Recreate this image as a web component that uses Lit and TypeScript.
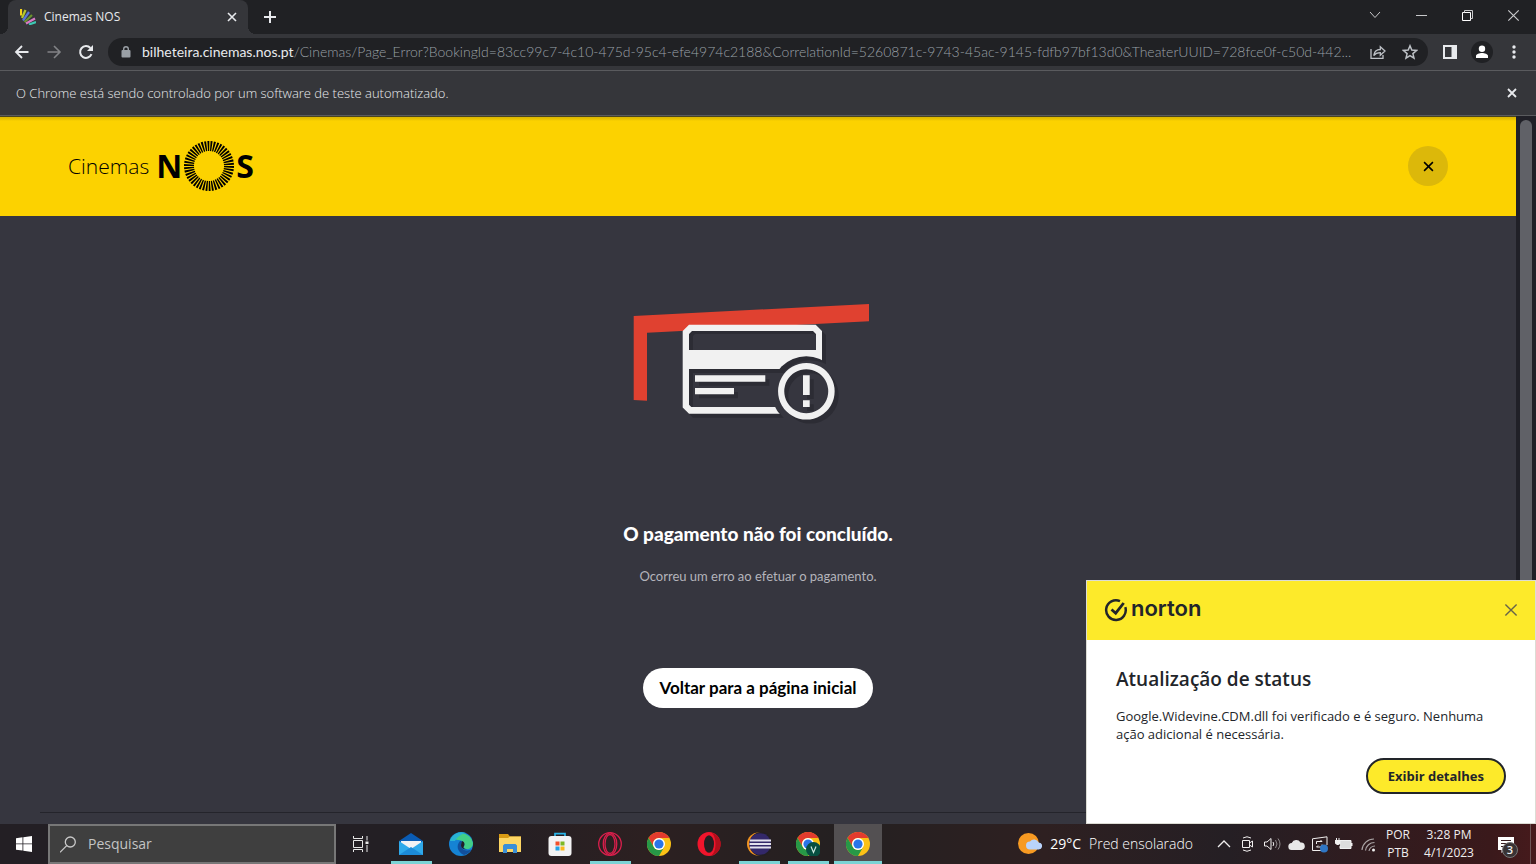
import { LitElement, html, css, svg } from "lit";
import { customElement } from "lit/decorators.js";
import { classMap } from "lit/directives/class-map.js";

const reset = css`
  :host, * { box-sizing: border-box; }
  button, input { font: inherit; color: inherit; background: none; border: 0; padding: 0; margin: 0; min-width: 0; outline: none; }
  button { display: grid; place-items: center; cursor: pointer; }
  svg { display: block; flex: none; }
  a { color: inherit; text-decoration: none; }
  h1, h2, p { margin: 0; }
`;

const cross = (size: number, width: number) => html`<svg width=${size} height=${size} viewBox="0 0 10 10" fill="none" stroke="currentColor" stroke-width=${width}><path d="M1 1 9 9M9 1 1 9" /></svg>`;

@customElement("browser-chrome")
export class BrowserChrome extends LitElement {
  static styles = [reset, css`
    :host { display: block; background: #35363a; color: #e8eaed; font-family: "Open Sans", "Noto Sans", sans-serif; }
    .strip { display: flex; height: 34px; background: #202124; }
    .tab { position: relative; display: flex; align-items: center; width: 240px; margin-left: 8px; padding: 0 8px 0 12px; background: #35363a; border-radius: 8px 8px 0 0; font-size: 12px; line-height: 16px; }
    .tab::before, .tab::after { content: ""; position: absolute; bottom: 0; width: 8px; height: 8px; }
    .tab::before { right: 100%; background: radial-gradient(circle at 0 0, #202124 8px, #35363a 8px); }
    .tab::after { left: 100%; background: radial-gradient(circle at 100% 0, #202124 8px, #35363a 8px); }
    .title { flex: 1; margin-left: 8px; }
    .close { width: 16px; height: 16px; }
    .new { width: 28px; margin-left: 8px; }
    .window { display: flex; margin-left: auto; height: 30px; }
    .window button { width: 46px; color: #c8c9cb; }
    .bar { display: flex; align-items: center; height: 36px; padding: 0 6px; }
    .tool { width: 32px; height: 28px; }
    .off { color: #828386; }
    .omni { display: flex; align-items: center; flex: 1; min-width: 0; height: 28px; margin: 0 6px; padding: 0 2px 0 12px; border-radius: 14px; background: #202124; font-family: Lato, sans-serif; font-size: 14px; line-height: 20px; }
    .omni label { margin-left: 10px; }
    .omni input { flex: 1; height: 20px; color: #9aa0a6; font-weight: 300; text-overflow: ellipsis; }
    .omni .tool { color: #bdc1c6; }
    .avatar { display: grid; place-items: center; width: 22px; height: 22px; border-radius: 50%; background: #202124; }
    .info { display: flex; align-items: center; justify-content: space-between; height: 46px; padding: 0 19px 0 16px; border-top: 1px solid #5a5b5e; border-bottom: 1px solid #5a5b5e; font-size: 13px; font-weight: 300; line-height: 18px; }
  `];

  render() {
    return html`
      <div class="strip">
        <div class="tab">
          <svg width="16" height="16" viewBox="0 0 16 16" fill="none" stroke-width="2.200">
            <path d="M1 0v6.500" stroke="#f3d21b" /><path d="M5.500 1 2 9" stroke="#b4c92a" /><path d="m9 3-6 8.500" stroke="#5878d8" />
            <path d="m12 6-7.500 7" stroke="#69942d" /><path d="m15 9.500-9 5" stroke="#d77bc4" /><path d="M16 13 9 15.500" stroke="#3cc9b4" />
          </svg>
          <span class="title">Cinemas NOS</span>
          <button class="close" aria-label="Fechar guia">${cross(10, 1.6)}</button>
        </div>
        <button class="new" aria-label="Nova guia"><svg width="12" height="12" viewBox="0 0 12 12" stroke="currentColor" stroke-width="2"><path d="M6 0v12M0 6h12" /></svg></button>
        <div class="window">
          <button aria-label="Pesquisar guias"><svg width="12" height="8" viewBox="0 0 12 8" fill="none" stroke="currentColor"><path d="m1 1 5 5.500 5-5.500" /></svg></button>
          <button aria-label="Minimizar"><svg width="11" height="11" viewBox="0 0 11 11" stroke="currentColor"><path d="M0 5.500h11" /></svg></button>
          <button aria-label="Restaurar"><svg width="11" height="11" viewBox="0 0 11 11" fill="none" stroke="#fff"><path d="M.5 2.500h8v8h-8z" /><path d="M2.500 2.500v-2h8v8h-2" stroke="#c8c9cb" /></svg></button>
          <button aria-label="Fechar">${cross(13, 0.9)}</button>
        </div>
      </div>
      <div class="bar">
        <button class="tool" aria-label="Voltar"><svg width="16" height="16" viewBox="0 0 16 16" fill="none" stroke="currentColor" stroke-width="1.800"><path d="M14.500 8H2M8 2 2 8l6 6" /></svg></button>
        <button class="tool off" aria-label="Avançar"><svg width="16" height="16" viewBox="0 0 16 16" fill="none" stroke="currentColor" stroke-width="1.600"><path d="M1.500 8H14M8 2l6 6-6 6" /></svg></button>
        <button class="tool" aria-label="Recarregar"><svg width="16" height="16" viewBox="0 0 16 16" fill="none" stroke="currentColor" stroke-width="2"><path d="M13.500 10.200A5.900 5.900 0 1 1 12.400 4" /><path d="M15 1v6H9z" fill="currentColor" stroke="none" /></svg></button>
        <div class="omni">
          <svg width="12" height="14" viewBox="0 0 12 14"><rect x="1.500" y="5" width="9" height="7.500" rx="1" fill="#9aa0a6" /><path d="M3.700 5.500V4a2.300 2.300 0 0 1 4.600 0v1.500" fill="none" stroke="#9aa0a6" stroke-width="1.400" /></svg>
          <label for="url">bilheteira.cinemas.nos.pt</label>
          <input id="url" type="text" value="/Cinemas/Page_Error?BookingId=83cc99c7-4c10-475d-95c4-efe4974c2188&CorrelationId=5260871c-9743-45ac-9145-fdfb97bf13d0&TheaterUUID=728fce0f-c50d-442..." />
          <button class="tool" aria-label="Compartilhar"><svg width="16" height="16" viewBox="0 0 16 16" fill="none" stroke="currentColor" stroke-width="1.300"><path d="M1 5v9.300h12V11" /><path d="M3.700 11.500c.6-4 2.800-6 6.600-6V2.700L15 7l-4.700 4.300V8.600c-3 0-5 .8-6.600 2.900z" /></svg></button>
          <button class="tool" aria-label="Favoritos"><svg width="16" height="16" viewBox="0 0 16 16" fill="none" stroke="currentColor" stroke-width="1.500"><path d="m8 1.800 1.800 4.300 4.700.4-3.600 3.100 1.100 4.600-4-2.500-4 2.500 1.100-4.600-3.600-3.100 4.700-.4z" /></svg></button>
        </div>
        <button class="tool" aria-label="Painel lateral"><svg width="14" height="14" viewBox="0 0 14 14" fill="none" stroke="currentColor" stroke-width="2"><path d="M1 1h12v12H1z" /><path d="M8.500 1H13v12H8.500z" fill="currentColor" stroke="none" /></svg></button>
        <button class="tool" aria-label="Perfil"><span class="avatar"><svg width="14" height="14" viewBox="0 0 14 14" fill="#fff"><circle cx="7" cy="3.700" r="3.200" /><path d="M1 13v-2c0-2 3.500-3 6-3s6 1 6 3v2z" /></svg></span></button>
        <button class="tool" aria-label="Menu"><svg width="4" height="14" viewBox="0 0 4 14" fill="currentColor"><circle cx="2" cy="2" r="1.700" /><circle cx="2" cy="7" r="1.700" /><circle cx="2" cy="12" r="1.700" /></svg></button>
      </div>
      <div class="info">
        <span>O Chrome está sendo controlado por um software de teste automatizado.</span>
        <button aria-label="Fechar aviso">${cross(10, 1.8)}</button>
      </div>`;
  }
}

@customElement("payment-page")
export class PaymentPage extends LitElement {
  static styles = [reset, css`
    :host { display: flex; min-height: 0; background: #202027; font-family: Lato, "Open Sans", sans-serif; }
    .page { flex: 1; min-width: 0; overflow: hidden; background: #36363f; color: #fff; }
    header { display: flex; align-items: center; justify-content: space-between; height: 100px; padding: 0 68px; background: linear-gradient(#4a4520 1px, #dcb600 1px, #e6c000 3px, #fcd200 5px); color: #000; }
    .logo { display: flex; align-items: center; line-height: 32px; }
    .brand { margin-right: 7px; font-family: "Open Sans", sans-serif; font-size: 21px; font-weight: 300; }
    .big { font-family: "Open Sans", sans-serif; font-size: 32px; font-weight: 700; }
    .round { width: 40px; height: 40px; border-radius: 50%; background: #dcb80a; }
    main { display: flex; flex-direction: column; align-items: center; padding-top: 87px; }
    h1 { margin-top: 96px; font-size: 19px; font-weight: 900; line-height: 26px; }
    p { margin-top: 20px; color: #b4b4bb; font-size: 13px; line-height: 18px; }
    .back { height: 40px; margin-top: 83px; padding: 0 16px; border-radius: 20px; background: #fff; color: #000; font-size: 17px; font-weight: 700; line-height: 24px; }
    footer { height: 60px; margin: 104px 40px 0; border-top: 1px solid #24242b; }
    .scroll { flex: none; width: 20px; padding: 4px 4px 0; }
    .thumb { height: 100%; border-radius: 6px 6px 0 0; background: #606167; }
  `];

  render() {
    return html`
      <div class="page">
        <header>
          <a class="logo" href="#" aria-label="Cinemas NOS">
            <span class="brand">Cinemas</span><span class="big">N</span>
            <svg width="54" height="52" viewBox="-27 -26 54 52"><circle r="20" pathLength="92" fill="none" stroke="#000" stroke-width="10" stroke-dasharray="1.200 .800" /></svg>
            <span class="big">S</span>
          </a>
          <button class="round" aria-label="Fechar">${cross(11, 1.4)}</button>
        </header>
        <main>
          <svg width="250" height="122" viewBox="0 0 250 122">
            <defs>
              <mask id="hole"><path d="M0 0h250v122H0z" fill="#fff" /><circle cx="173.300" cy="88.300" r="35" fill="#000" /></mask>
              <g id="card">
                <g mask="url(#hole)">
                  <path fill-rule="evenodd" d="M56 21.700h126.700l6.300 6.300v76.400l-6.300 6.300H56l-6.300-6.300V28zM59 28l-3 3v16h127V31l-3-3zM56 66v35.700l2.300 2.300h122.400l2.300-2.300V66z" />
                </g>
                <path d="M62 72.300h70.300v6.400H62zM62 85h39v6.300H62zM170 72.300h6.700V92H170zM170 97.300h6.700v6.700H170z" />
                <path fill-rule="evenodd" d="M173.300 60a28.300 28.300 0 1 0 .1 0zM173.300 66.300a22 22 0 1 1-.1 0z" />
              </g>
            </defs>
            <path d="M.7 13 236 1v17.300L14 29.700v68L.7 97z" fill="#e04130" />
            <use href="#card" x="4" y="4" fill="#2c2c34" />
            <path d="M56 28h127v19H56z" fill="#36363f" />
            <path d="M56 47V31l3-3h121l3 3H62l-2 2v14z" fill="#2c2c34" />
            <use href="#card" fill="#f1f1f1" />
          </svg>
          <h1>O pagamento não foi concluído.</h1>
          <p>Ocorreu um erro ao efetuar o pagamento.</p>
          <button class="back">Voltar para a página inicial</button>
        </main>
        <footer></footer>
      </div>
      <div class="scroll"><div class="thumb"></div></div>`;
  }
}

@customElement("norton-toast")
export class NortonToast extends LitElement {
  static styles = [reset, css`
    :host { display: block; width: 450px; background: #fff; color: #22252a; font-family: "Open Sans", "Noto Sans", sans-serif; border: 1px solid #dcdcd4; }
    header { display: flex; align-items: center; justify-content: space-between; height: 59px; padding: 0 17px 2px 17px; background: #fdea2a; }
    .brand { display: flex; align-items: center; gap: 3px; font-family: Inter, sans-serif; font-size: 22px; font-weight: 600; line-height: 24px; }
    .name { padding-bottom: 4px; }
    .x { color: #66644a; }
    section { padding: 26px 29px 29px; }
    h2 { font-size: 19px; font-weight: 600; line-height: 26px; }
    p { margin-top: 15px; font-size: 13px; line-height: 18px; }
    .more { height: 36px; margin: 15px 0 0 auto; padding: 0 20px; border: 2px solid #22252a; border-radius: 18px; background: #fdea2a; font-size: 13px; font-weight: 700; line-height: 18px; }
  `];

  render() {
    return html`
      <header>
        <span class="brand">
          <svg width="24" height="24" viewBox="0 0 24 24" fill="none" stroke="#22252a" stroke-width="2.500"><path d="M16 3.200A9.800 9.800 0 1 0 21.300 9.200" /><path d="m7.500 11.500 4.200 3.700 8-10.200" stroke-width="2.800" /></svg>
          <span class="name">norton</span>
        </span>
        <button class="x" aria-label="Fechar">${cross(14, 1)}</button>
      </header>
      <section>
        <h2>Atualização de status</h2>
        <p>Google.Widevine.CDM.dll foi verificado e é seguro. Nenhuma ação adicional é necessária.</p>
        <button class="more">Exibir detalhes</button>
      </section>`;
  }
}

const chromeArt = svg`
  <circle cx="12" cy="12" r="12" fill="#fbc116" />
  <path d="M1.600 6A12 12 0 0 1 22.400 6H12a6 6 0 0 0-5.200 9z" fill="#e33b2e" />
  <path d="M1.600 6A12 12 0 0 0 12 24l5.200-9a6 6 0 0 1-10.400 0z" fill="#279847" />
  <circle cx="12" cy="12" r="6" fill="#fff" /><circle cx="12" cy="12" r="4.600" fill="#2a75e8" />`;

const apps = [
  { name: "Email", open: true, art: svg`<path d="M0 9 12 1l12 8v4H0z" fill="#0a5cb4" /><path d="M2 9h20v9H2z" fill="#f2f2f4" /><path d="M0 9v14h24V9l-12 8z" fill="#2fa9ea" /><path d="m0 23 12-8 12 8z" fill="#1c8bd8" />` },
  { name: "Edge", open: false, art: svg`<circle cx="12" cy="12" r="12" fill="#1583d4" /><path d="M1 9A12 12 0 0 1 24 11c0 4-3 6-6 6-3-.2-4-1-3-2.500 1-2 .5-5-3-6C8 7 3 8 1 9z" fill="#42cf87" /><path d="M1 9A12 12 0 0 1 17 1c-5 1-9 4-11 8z" fill="#29b4d4" /><path d="M11 9c-4 4-3 11 4 14 3-.5 6-3 7.500-5.500-5 2-9 1-10-2.500-.5-3 1-4 0-6z" fill="#124f9c" /><path d="M13 9c3 1 3 4 1.500 6-.5 1.500 1.500 2 3.500 2-2 1-6 0-6-4z" fill="#231f24" />` },
  { name: "Explorador", open: false, art: svg`<path d="M1 2h9l2 2.500h11V20H1z" fill="#d99b14" /><path d="M1 6h9l2-1.500h11V20H1z" fill="#fdd663" /><path d="M5 21v-7.500l1.500-1.500h11l1.500 1.500V21h-4v-4H9v4z" fill="#3b8fd6" />` },
  { name: "Store", open: false, art: svg`<path d="M7 6V1.600h10V6" fill="none" stroke="#2ab6ea" stroke-width="1.700" /><rect x=".5" y="4" width="23" height="20" rx="3" fill="#f3f3f4" /><path d="M7.500 9.500h4v4h-4z" fill="#f1512c" /><path d="M12.500 9.500h4v4h-4z" fill="#7eb825" /><path d="M7.500 14.500h4v4h-4z" fill="#23a3e6" /><path d="M12.500 14.500h4v4h-4z" fill="#fbb81c" />` },
  { name: "Opera GX", open: true, art: svg`<g fill="none" stroke="#d91f4c" stroke-width="1.300"><circle cx="12" cy="12" r="11.300" /><ellipse cx="12" cy="12" rx="5" ry="9.500" /><path d="M12 .7C3 4 3 20 12 23.300M12 .7c9 3.300 9 19.300 0 22.600" /></g>` },
  { name: "Chrome", open: false, art: chromeArt },
  { name: "Opera", open: false, art: svg`<ellipse cx="12" cy="12" rx="11.500" ry="12" fill="#f0152c" /><path d="M14 .4c13 3 13 20 0 23.200 6-3 6-20 0-23.200z" fill="#b10f1c" /><ellipse cx="12" cy="12" rx="5" ry="8.800" fill="#241f22" />` },
  { name: "Eclipse", open: true, art: svg`<circle cx="11.500" cy="12" r="11.500" fill="#ef9220" /><ellipse cx="14" cy="12" rx="11.500" ry="12" fill="#231f24" /><circle cx="13" cy="12" r="10.800" fill="#33286a" /><path d="M3 8.500h21M2.500 12h22M3 15.500h21" stroke="#e4e2ef" stroke-width="1.800" />` },
  { name: "Chrome V", open: true, art: svg`${chromeArt}<circle cx="17.500" cy="17.500" r="7.500" fill="#074f41" /><path d="m15 14.500 2.500 6 2.500-6" fill="none" stroke="#cde7df" stroke-width="1.200" />` },
  { name: "Chrome ativo", open: true, active: true, art: chromeArt },
];

@customElement("task-bar")
export class TaskBar extends LitElement {
  static styles = [reset, css`
    :host { display: flex; height: 40px; background: linear-gradient(90deg, #231f24 0 30%, #2c2021 42%, #242021 55%, #2e2021 68%, #251f24 80%, #3a191b 97%, #461a1c); color: #f0eeee; font-family: "Open Sans", "Noto Sans", sans-serif; font-size: 14px; line-height: 20px; }
    .start { width: 48px; }
    .search { display: flex; align-items: center; gap: 12px; width: 288px; padding: 0 10px; border: 2px solid #777; background: #3f3f3f; color: #c9c9c9; }
    .search input { flex: 1; height: 20px; }
    .search input::placeholder { color: #c4c4c4; opacity: 1; }
    .apps { display: flex; justify-content: space-between; width: 495px; margin-left: 3px; }
    .app { position: relative; width: 48px; }
    .open::after { content: ""; position: absolute; inset: auto 3px 0 4px; height: 3px; background: #7bd3d5; }
    .active { background: #535052; }
    .active::after { inset: auto 0 0; }
    .weather { display: flex; align-items: center; gap: 8px; margin-left: auto; margin-right: 19px; font-weight: 300; color: #fff; }
    .weather b { font-weight: 400; }
    .tray { display: flex; }
    .icon { width: 24px; }
    .two { width: 36px; place-content: center; text-align: center; font-size: 12px; line-height: 18px; }
    .clock { width: 66px; }
    .notes { position: relative; width: 48px; }
    .count { position: absolute; left: 20px; top: 18px; width: 16px; height: 16px; border: 1px solid #777; border-radius: 50%; background: #393335; font-size: 11px; font-weight: 600; line-height: 14px; }
    .edge { width: 6px; border-left: 1px solid #6d5556; }
  `];

  render() {
    return html`
      <button class="start" aria-label="Iniciar"><svg width="16" height="16" viewBox="0 0 16 16" fill="#fff"><path d="M0 2.200 6.500 1.300v6.200H0zM7.300 1.200 16 0v7.500H7.300zM0 8.300h6.500v6.300L0 13.700zM7.300 8.300H16V16l-8.700-1.300z" /></svg></button>
      <label class="search">
        <svg width="16" height="17" viewBox="0 0 16 17" fill="none" stroke="currentColor" stroke-width="1.300"><circle cx="10.300" cy="6" r="5" /><path d="M6.700 9.600 0 16.300" /></svg>
        <input type="text" placeholder="Pesquisar" aria-label="Pesquisar" />
      </label>
      <button class="start" aria-label="Visão de tarefas"><svg width="17" height="16" viewBox="0 0 17 16" fill="none" stroke="#e8e8e8"><path d="M1.500 4.500h9v7h-9zM1.500 0v2.500h9V0M1.500 16v-2.500h9V16M15 0v4.500M15 9v7" /><path d="M13.500 5.500h3v2.500h-3z" fill="#e8e8e8" stroke="none" /></svg></button>
      <nav class="apps">
        ${apps.map(a => html`<button class=${classMap({ app: true, open: a.open, active: !!a.active })} aria-label=${a.name}><svg width="24" height="24" viewBox="0 0 24 24">${a.art}</svg></button>`)}
      </nav>
      <button class="weather">
        <svg width="24" height="22" viewBox="0 0 24 22"><circle cx="10.500" cy="10.500" r="10.500" fill="#f79a22" /><path d="M12 20h8.500a3.500 3.500 0 0 0 .2-7A5 5 0 0 0 12 12a4 4 0 0 0 0 8z" transform="translate(0 -3.500)" fill="#b9d3fb" /></svg>
        <b>29°C</b><span>Pred ensolarado</span>
      </button>
      <div class="tray">
        <button class="icon" aria-label="Mostrar ícones ocultos"><svg width="14" height="8" viewBox="0 0 14 8" fill="none" stroke="currentColor" stroke-width="1.300"><path d="m1 7 6-6 6 6" /></svg></button>
        <button class="icon" aria-label="Câmera"><svg width="14" height="16" viewBox="0 0 14 16" fill="none" stroke="currentColor"><path d="M1.500 4.500h7v7h-7zM8.500 7l3-2v6l-3-2M2 2q4-2.500 8 0M2 14q4 2.500 8 0" /></svg></button>
        <button class="icon" aria-label="Volume"><svg width="17" height="14" viewBox="0 0 17 14" fill="none" stroke="currentColor"><path d="M.5 5v4H3l4 3.500v-11L3 5zM9 5q1.500 2 0 4" /><path d="M11.500 3q3 4 0 8M14 1.500q4 5.500 0 11" stroke="#8f8a8b" /></svg></button>
        <button class="icon" aria-label="OneDrive"><svg width="17" height="11" viewBox="0 0 17 11"><path d="M4 11a3.500 3.500 0 0 1-.3-7A5 5 0 0 1 12.500 3.500 3.700 3.700 0 0 1 13.500 11z" fill="#e8e8e8" /></svg></button>
        <button class="icon" aria-label="Atualização"><svg width="18" height="17" viewBox="0 0 18 17" fill="none" stroke="currentColor"><path d="M10 14.500H1.500V2.800L16 .8V9" /><path d="M5.500 8V5.500H11M9.500 4l1.500 1.500M11 8.500V11H5.500M7 9.500 5.500 11" /><circle cx="13" cy="12.500" r="4" fill="#2f76c4" stroke="none" /></svg></button>
        <button class="icon" aria-label="Bateria"><svg width="18" height="12" viewBox="0 0 18 12"><path d="M4.500 4V2.500h11.500v8H5V8" fill="#ddd" stroke="#f0f0f0" /><path d="M16 5h1.500v3H16zM0 2h5.500v3.500L3.500 7H2L0 5.500zM1 0h1v2H1zM3.500 0h1v2h-1z" fill="#f0f0f0" /></svg></button>
        <button class="icon" aria-label="Wi-Fi"><svg width="15" height="15" viewBox="0 0 15 15" fill="none" stroke="#a9a4a5" stroke-width="1.200"><path d="M1 13A12 12 0 0 1 13 2M4.500 13.500A9 9 0 0 1 13.500 5.500M8 14a6 6 0 0 1 6-5" /><circle cx="12.500" cy="13" r="1.500" fill="#f0f0f0" stroke="none" /></svg></button>
        <button class="two" aria-label="Idioma"><span>POR</span><span>PTB</span></button>
        <button class="two clock"><span>3:28 PM</span><span>4/1/2023</span></button>
        <button class="notes" aria-label="Notificações">
          <svg width="18" height="17" viewBox="0 0 18 17"><path d="M1 1h16v13H8l-3.500 3v-3H1z" fill="#fff" /><path d="M4 4.500h10M4 7.500h10M4 10.500h6" stroke="#3a2022" /></svg>
          <span class="count">3</span>
        </button>
        <div class="edge"></div>
      </div>`;
  }
}

@customElement("app-root")
export class AppRoot extends LitElement {
  static styles = css`
    :host { position: relative; display: flex; flex-direction: column; height: 100vh; overflow: hidden; }
    payment-page { flex: 1; }
    norton-toast { position: absolute; right: 0; bottom: 40px; }
  `;

  render() {
    return html`<browser-chrome></browser-chrome><payment-page></payment-page><task-bar></task-bar><norton-toast></norton-toast>`;
  }
}
